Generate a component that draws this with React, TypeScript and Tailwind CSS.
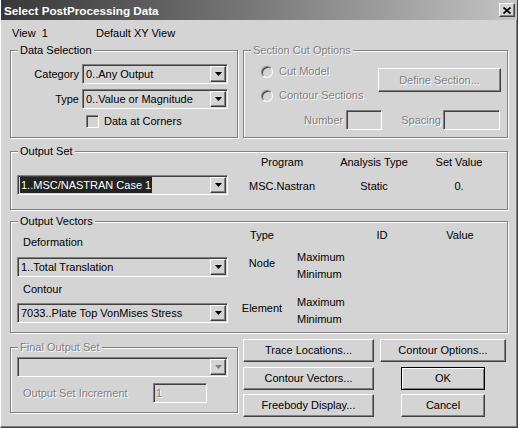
import type { ReactNode } from "react";

const face = "bg-[#d4d4d4]";
const sunken =
  "border border-t-[#808080] border-l-[#808080] border-r-white border-b-white shadow-[inset_1px_1px_0_#404040,inset_-1px_-1px_0_#d4d4d4]";
const raised =
  "border border-t-white border-l-white border-r-[#404040] border-b-[#404040] shadow-[inset_-1px_-1px_0_#808080]";
const dim = "text-[#808080] [text-shadow:1px_1px_0_#fff]";

function Group({ title, off, className, children }: { title: string; off?: boolean; className: string; children?: ReactNode }) {
  return (
    <fieldset className={`border border-[#808080] shadow-[1px_1px_0_#fff,inset_1px_1px_0_#fff] ${className}`}>
      <legend className={`ml-[7px] px-[2px] leading-[13px] ${face} ${off ? dim : ""}`}>{title}</legend>
      {children}
    </fieldset>
  );
}

function Combo({ text, w, selected, off }: { text: string; w: string; selected?: boolean; off?: boolean }) {
  return (
    <div className={`flex h-[20px] p-[1px] ${w} ${sunken} ${face}`}>
      <div className="flex-1 flex items-center pl-[1px] whitespace-nowrap overflow-hidden">
        {selected ? <span className="bg-[#242424] text-white px-[1px] leading-[16px]">{text}</span> : <span className="pl-[1px]">{text}</span>}
      </div>
      <div className={`w-[16px] h-[16px] flex items-center justify-center ${raised}`}>
        <svg width="7" height="4" viewBox="0 0 7 4">
          <path d="M0 0h7L3.5 4z" fill={off ? "#808080" : "#000"} />
        </svg>
      </div>
    </div>
  );
}

function Btn({ label, className, off, def }: { label: string; className: string; off?: boolean; def?: boolean }) {
  const edge = def
    ? "border border-black shadow-[inset_1px_1px_0_#fff,inset_-1px_-1px_0_#808080]"
    : raised;
  return (
    <div className={`h-[23px] flex items-center justify-center ${edge} ${off ? dim : ""} ${className}`}>{label}</div>
  );
}

function Radio({ label }: { label: string }) {
  return (
    <div className="flex items-center h-[13px]">
      <span className="w-[12px] h-[12px] rounded-full border border-t-[#808080] border-l-[#808080] border-r-white border-b-white shadow-[inset_1px_1px_0_#404040]" />
      <span className={`ml-[6px] ${dim}`}>{label}</span>
    </div>
  );
}

export default function App() {
  return (
    <div className={`w-[518px] h-[428px] overflow-hidden flex flex-col ${face} text-black text-[11px] leading-[13px] font-['Liberation_Sans',Arial,sans-serif] border-l border-l-white border-r border-b border-r-[#404040] border-b-[#404040] shadow-[inset_-1px_-1px_0_#808080]`}>
      <div className="h-[20px] shrink-0 flex items-center pl-[3px] pr-[2px] bg-linear-to-r from-[#383838] to-[#c4c4c4]">
        <span className="font-bold text-white text-[11.7px]">Select PostProcessing Data</span>
        <div className={`ml-auto w-[16px] h-[14px] flex items-center justify-center ${face} ${raised}`}>
          <svg width="8" height="7" viewBox="0 0 8 7">
            <path d="M0.5 0.5L7.5 6.5M7.5 0.5L0.5 6.5" stroke="#000" strokeWidth="1.7" />
          </svg>
        </div>
      </div>

      <div className="flex flex-col pl-[9px] pr-[9px]">
        <div className="flex mt-[7px] pl-[2px]">
          <span className="w-[84px]">{"View\u00a0\u00a01"}</span>
          <span>Default XY View</span>
        </div>

        <div className="flex mt-[4px] gap-[5px]">
          <Group title="Data Selection" className="w-[228px] h-[94px]">
            <div className="flex flex-col items-end pr-[9px] pt-[7px]">
              <div className="flex items-center gap-[3px]">
                <span>Category</span>
                <Combo w="w-[146px]" text="0..Any Output" />
              </div>
              <div className="flex items-center gap-[3px] mt-[5px]">
                <span>Type</span>
                <Combo w="w-[146px]" text="0..Value or Magnitude" />
              </div>
            </div>
            <div className="flex items-center mt-[6px] pl-[75px]">
              <span className={`w-[13px] h-[13px] ${sunken} ${face}`} />
              <span className="ml-[5px]">Data at Corners</span>
            </div>
          </Group>

          <Group title="Section Cut Options" off className="w-[265px] h-[94px]">
            <div className="flex pl-[17px] pr-[6px]">
              <div className="flex flex-col pt-[8px] gap-[11px]">
                <Radio label="Cut Model" />
                <Radio label="Contour Sections" />
              </div>
              <Btn label="Define Section..." off className="ml-auto mt-[11px] w-[123px] h-[24px]" />
            </div>
            <div className="flex items-center justify-end pr-[7px] mt-[8px]">
              <span className={dim}>Number</span>
              <div className={`ml-[3px] w-[36px] h-[20px] ${sunken}`} />
              <span className={`ml-[19px] ${dim}`}>Spacing</span>
              <div className={`ml-[2px] w-[57px] h-[20px] ${sunken}`} />
            </div>
          </Group>
        </div>

        <Group title="Output Set" className="w-[498px] h-[65px] mt-[7px]">
          <div className="flex -mt-[2px]">
            <div className="ml-[6px] mt-[19px]">
              <Combo w="w-[211px]" text="1..MSC/NASTRAN Case 1" selected />
            </div>
            <div className="ml-[9px] grid grid-cols-[90px_94px_76px] gap-y-[9px] text-center">
              <span>Program</span>
              <span>Analysis Type</span>
              <span>Set Value</span>
              <span>MSC.Nastran</span>
              <span>Static</span>
              <span>0.</span>
            </div>
          </div>
        </Group>

        <Group title="Output Vectors" className="w-[498px] h-[118px] mt-[5px]">
          <div className="flex">
            <div className="flex flex-col pl-[6px]">
              <span className="pl-[6px] mt-[8px]">Deformation</span>
              <div className="mt-[8px]">
                <Combo w="w-[211px]" text="1..Total Translation" />
              </div>
              <span className="pl-[6px] mt-[6px]">Contour</span>
              <div className="mt-[7px]">
                <Combo w="w-[211px]" text="7033..Plate Top VonMises Stress" />
              </div>
            </div>
            <div className="ml-[12px] flex flex-col">
              <div className="flex mt-[1px]">
                <span className="w-[44px] text-center">Type</span>
                <span className="ml-[78px] w-[40px] text-center">ID</span>
                <span className="ml-[38px] w-[40px] text-center">Value</span>
              </div>
              <div className="flex mt-[7px]">
                <span className="w-[44px] text-center pt-[8px]">Node</span>
                <div className="ml-[13px] flex flex-col leading-[17px]">
                  <span>Maximum</span>
                  <span>Minimum</span>
                </div>
              </div>
              <div className="flex mt-[11px]">
                <span className="w-[44px] text-center pt-[8px]">Element</span>
                <div className="ml-[13px] flex flex-col leading-[17px]">
                  <span>Maximum</span>
                  <span>Minimum</span>
                </div>
              </div>
            </div>
          </div>
        </Group>

        <div className="flex mt-[6px]">
          <Group title="Final Output Set" off className="w-[228px] h-[72px] mt-[2px]">
            <div className="pl-[6px] mt-[3px]">
              <Combo w="w-[211px]" text="" off />
            </div>
            <div className="flex items-center mt-[6px] pl-[12px]">
              <span className={`w-[130px] ${dim}`}>Output Set Increment</span>
              <div className={`w-[54px] h-[20px] flex items-center pl-[2px] ${sunken}`}>
                <span className={dim}>1</span>
              </div>
            </div>
          </Group>

          <div className="ml-[5px] flex flex-col">
            <Btn label="Trace Locations..." className="w-[131px]" />
            <Btn label="Contour Vectors..." className="w-[131px] mt-[5px]" />
            <Btn label="Freebody Display..." className="w-[131px] mt-[4px]" />
          </div>
          <div className="ml-[6px] flex flex-col items-start">
            <Btn label="Contour Options..." className="w-[126px]" />
            <Btn label="OK" def className="w-[84px] ml-[21px] mt-[5px]" />
            <Btn label="Cancel" className="w-[84px] ml-[21px] mt-[4px]" />
          </div>
        </div>
      </div>
    </div>
  );
}
